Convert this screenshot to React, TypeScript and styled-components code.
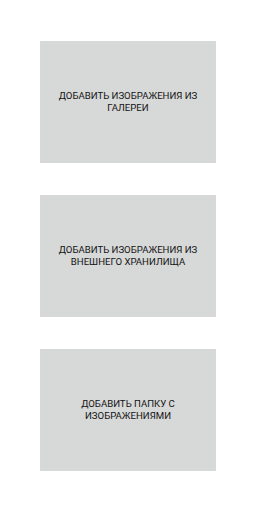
import styled, { createGlobalStyle } from "styled-components";

const GlobalStyle = createGlobalStyle`
  html, body {
    margin: 0;
    padding: 0;
    background-color: #ffffff;
    font-family: Roboto, "Noto Sans", sans-serif;
  }
`;

const StyledPage = styled.div`
  display: flex;
  flex-direction: column;
  align-items: center;
  gap: 32px;
  padding-top: 41px;
  min-height: 512px;
  box-sizing: border-box;
`;

const StyledCard = styled.button`
  width: 176px;
  height: 122px;
  display: flex;
  align-items: center;
  justify-content: center;
  padding: 0 14px;
  box-sizing: border-box;
  background-color: #d7d8d8;
  border: 0;
  border-radius: 0;
  font-family: inherit;
  font-size: 9.6px;
  line-height: 12.5px;
  color: #141414;
  text-align: center;
  text-transform: uppercase;
  cursor: pointer;
`;

const actions = [
  "Добавить изображения из галереи",
  "Добавить изображения из внешнего хранилища",
  "Добавить папку с изображениями",
];

export default function App() {
  return (
    <>
      <GlobalStyle />
      <StyledPage>
        {actions.map((label) => (
          <StyledCard key={label}>{label}</StyledCard>
        ))}
      </StyledPage>
    </>
  );
}
